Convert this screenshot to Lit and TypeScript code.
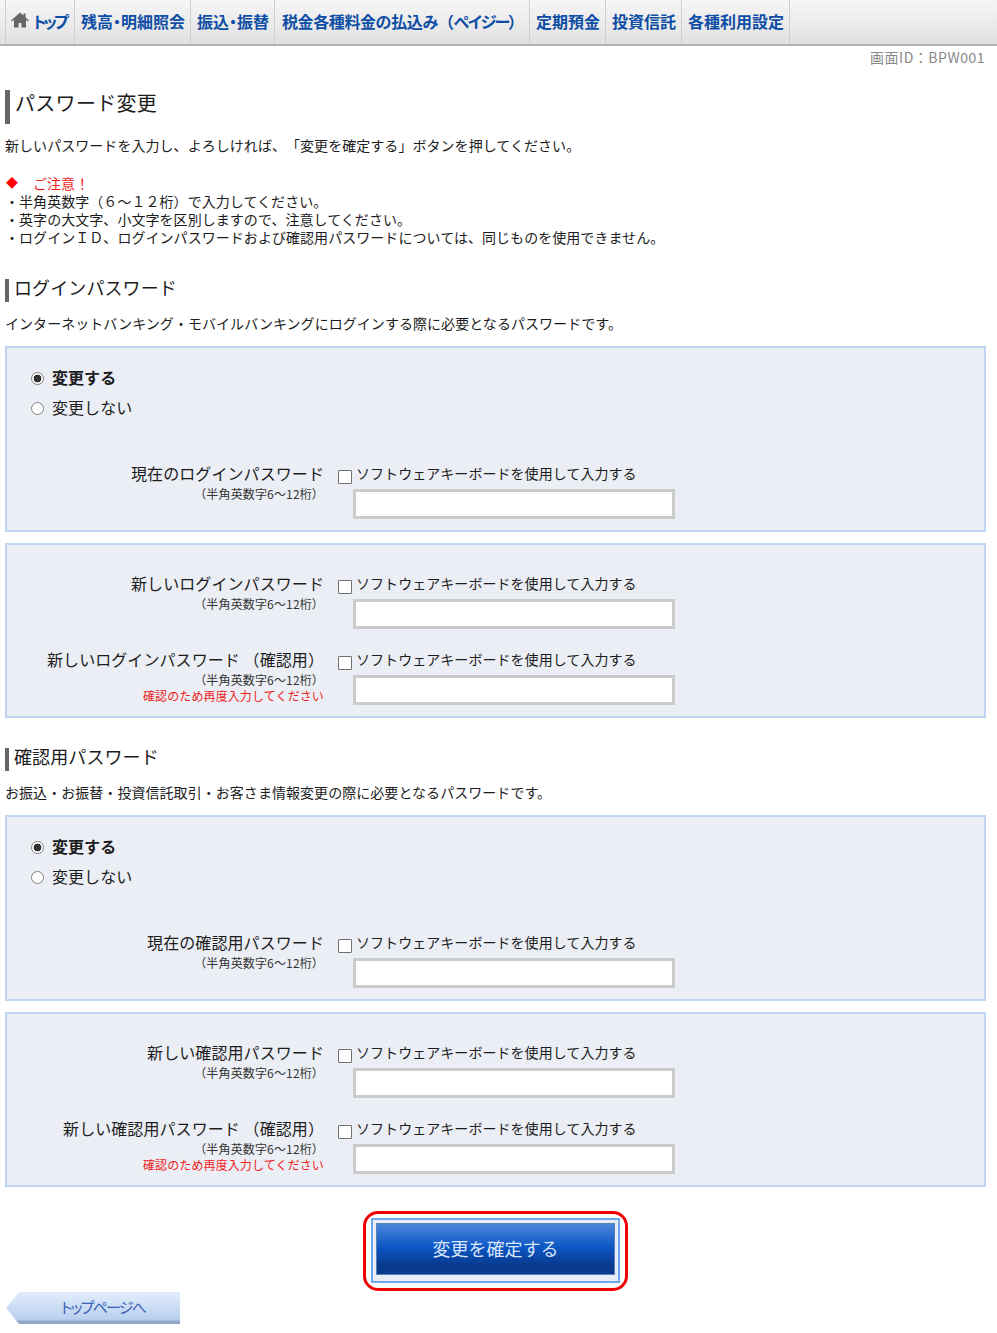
import { LitElement, html, css } from "lit";
import { customElement } from "lit/decorators.js";

const SMALL = "（半角英数字6〜12桁）";
const AGAIN = "確認のため再度入力してください";

@customElement("app-root")
export class AppRoot extends LitElement {
  static styles = css`
    :host {
      display: block;
      width: 997px;
      height: 1333px;
      overflow: hidden;
      background: #fff;
      color: #1c1c1c;
      font-family: "Noto Sans CJK JP", "Noto Sans", sans-serif;
      font-size: 14px;
      letter-spacing: 0.05px;
      text-spacing-trim: space-all;
    }
    * { box-sizing: border-box; }
    nav {
      display: flex;
      height: 46px;
      padding-left: 5px;
      background: linear-gradient(#f6f6f6, #e1e1e1);
      border-bottom: 2px solid #b4b4b4;
    }
    nav a {
      display: flex;
      align-items: center;
      flex: none;
      gap: 4px;
      padding: 0 6px 2px;
      border-left: 1px solid #cfcfcf;
      color: #0f4ea5;
      font-size: 16px;
      font-weight: 700;
      letter-spacing: 0;
      white-space: nowrap;
      line-height: 42px;
    }
    nav a:last-child { border-right: 1px solid #cfcfcf; }
    nav a.top { width: 69px; letter-spacing: -3px; padding-left: 5px; }
    nav a.kana { font-feature-settings: "palt"; }
    nav a.balance { width: 116px; }
    nav a.transfer { width: 84px; }
    nav a.wide { width: 255px; padding-left: 7px; letter-spacing: -0.4px; gap: 0; }
    nav a.wide span { display: block; }
    nav a.wide .squeeze { letter-spacing: -2.4px; }
    nav a.four { width: 76px; }
    nav a.six { width: 109px; }
    nav svg { display: block; margin-top: -2px; flex: none; }
    .screen {
      text-align: right;
      padding-right: 12px;
      color: #888;
      line-height: 22px;
      height: 22px;
      letter-spacing: 0.5px;
    }
    main { padding: 0 11px 0 5px; }
    h1, h2 { margin: 0; font-weight: 400; border-left-style: solid; border-left-color: #666; white-space: nowrap; }
    h1 {
      margin-top: 22px;
      height: 34px;
      border-left-width: 5px;
      padding-left: 5px;
      font-size: 20px;
      line-height: 26px;
      letter-spacing: 0.3px;
    }
    h2 {
      height: 23px;
      border-left-width: 4px;
      padding-left: 5px;
      font-size: 18px;
      line-height: 17px;
      letter-spacing: 0.1px;
    }
    p { margin: 0; white-space: nowrap; }
    .lead { margin-top: 11px; line-height: 20px; height: 20px; }
    .notes { margin-top: 19px; line-height: 18px; }
    .attention { color: #f01c1c; display: flex; }
    .diamond { width: 28px; font-size: 12px; padding-left: 1px; color: #f00; }
    .login { margin-top: 33px; }
    .second { margin-top: 30px; }
    .desc { margin: 11px 0 13px; line-height: 20px; height: 20px; }
    .panel {
      background: #ebeef4;
      border: 2px solid #bfd5f2;
      padding-bottom: 11px;
    }
    .panel + .panel { margin-top: 11px; }
    .panel.change { padding-top: 15px; }
    .panel.fresh { padding-top: 27px; }
    .choice {
      display: flex;
      align-items: center;
      gap: 8px;
      height: 30px;
      padding: 0 0 2px 24px;
      font-size: 16px;
    }
    .choice.on { font-weight: 700; }
    .choice input {
      appearance: none;
      width: 13px;
      height: 13px;
      margin: 2px 0 0;
      border: 1px solid #808080;
      border-radius: 50%;
      background: #fff;
    }
    .choice input:checked { background: radial-gradient(circle, #333 0 3.6px, #fff 4.2px); }
    .row {
      display: grid;
      grid-template-columns: 317px 1fr;
      column-gap: 14px;
    }
    .change .row { margin-top: 39px; }
    .row + .row { margin-top: 19px; }
    .labels { text-align: right; }
    .name { font-size: 16px; line-height: 22px; margin-bottom: 2px; white-space: nowrap; letter-spacing: 0.08px; }
    .hint { font-size: 12px; line-height: 16px; color: #333; white-space: nowrap; letter-spacing: 0.15px; }
    .hint.red { color: #f01c1c; letter-spacing: 0.12px; }
    .soft {
      display: flex;
      align-items: center;
      gap: 4px;
      height: 24px;
      padding-bottom: 2px;
      white-space: nowrap;
      letter-spacing: 0.05px;
    }
    .soft input {
      appearance: none;
      flex: none;
      width: 14px;
      height: 14px;
      margin: 7px 0 0;
      border: 1px solid #6f6f6f;
      border-radius: 1px;
      background: #fff;
    }
    .field {
      display: block;
      width: 322px;
      height: 30px;
      margin: 3px 0 0 15px;
      border: 3px solid #cbcbcb;
      background: #fff;
      outline: none;
    }
    .actions { display: flex; justify-content: center; margin-top: 24px; }
    .ring {
      width: 265px;
      height: 80px;
      border: 3px solid #f00000;
      border-radius: 15px;
      padding: 4px 5px 0;
    }
    .confirm {
      display: block;
      width: 249px;
      height: 65px;
      padding: 3px 3px 6px;
      border: 2px solid #6ea6ee;
      background: #e9edf6;
    }
    .confirm span {
      display: flex;
      align-items: center;
      justify-content: center;
      height: 100%;
      padding-bottom: 2px;
      color: #d9e6f8;
      font-family: "Noto Sans CJK JP", sans-serif;
      font-size: 18px;
      background: linear-gradient(#4b85d8 0, #0b55c4 48%, #083a8e 82%, #083a8e 100%);
      border: 1px solid #5d7fb8;
    }
    .back {
      display: flex;
      align-items: center;
      justify-content: center;
      width: 174px;
      height: 32px;
      margin: 1px 0 0 1px;
      padding: 0 0 3px 20px;
      color: #3a62b4;
      font-size: 15px;
      font-feature-settings: "palt";
      letter-spacing: -1.8px;
      background: linear-gradient(#e2edfb, #b9d0ef 85%, #8fa7ca 92%);
      clip-path: polygon(13px 0, 100% 0, 100% 100%, 13px 100%, 0 50%);
    }
  `;

  private row(name: string, again = false) {
    return html`
      <div class="row">
        <div class="labels">
          <div class="name">${name}</div>
          <div class="hint">${SMALL}</div>
          ${again ? html`<div class="hint red">${AGAIN}</div>` : null}
        </div>
        <div>
          <label class="soft"><input type="checkbox" />ソフトウェアキーボードを使用して入力する</label>
          <input class="field" type="password" />
        </div>
      </div>
    `;
  }

  private section(group: string, current: string, fresh: string, confirm: string) {
    return html`
      <div class="panel change">
        <label class="choice on"><input type="radio" name=${group} checked />変更する</label>
        <label class="choice"><input type="radio" name=${group} />変更しない</label>
        ${this.row(current)}
      </div>
      <div class="panel fresh">
        ${this.row(fresh)}
        ${this.row(confirm, true)}
      </div>
    `;
  }

  render() {
    return html`
      <nav>
        <a class="top kana">
          <svg width="18" height="16" viewBox="0 0 18 16" aria-hidden="true">
            <path fill="#666" d="M9 0.5 0 8.4l1 1.1L3 7.8v7.7h4.6v-4.4h2.8v4.4H15V7.8l2 1.7 1-1.1-3.4-3V1.5h-2.2v2z" />
          </svg>
          <span>トップ</span>
        </a>
        <a class="kana balance">残高・明細照会</a>
        <a class="kana transfer">振込・振替</a>
        <a class="wide"><span>税金各種料金の払込み（</span><span class="squeeze">ペイジー</span><span>）</span></a>
        <a class="four">定期預金</a>
        <a class="four">投資信託</a>
        <a class="six">各種利用設定</a>
      </nav>
      <div class="screen">画面ID：BPW001</div>
      <main>
        <h1>パスワード変更</h1>
        <p class="lead">新しいパスワードを入力し、よろしければ、「変更を確定する」ボタンを押してください。</p>
        <div class="notes">
          <p class="attention"><span class="diamond">◆</span>ご注意！</p>
          <p>・半角英数字（６～１２桁）で入力してください。</p>
          <p>・英字の大文字、小文字を区別しますので、注意してください。</p>
          <p>・ログインＩＤ、ログインパスワードおよび確認用パスワードについては、同じものを使用できません。</p>
        </div>
        <h2 class="login">ログインパスワード</h2>
        <p class="desc">インターネットバンキング・モバイルバンキングにログインする際に必要となるパスワードです。</p>
        ${this.section("login", "現在のログインパスワード", "新しいログインパスワード", "新しいログインパスワード （確認用）")}
        <h2 class="second">確認用パスワード</h2>
        <p class="desc">お振込・お振替・投資信託取引・お客さま情報変更の際に必要となるパスワードです。</p>
        ${this.section("confirm", "現在の確認用パスワード", "新しい確認用パスワード", "新しい確認用パスワード （確認用）")}
        <div class="actions">
          <div class="ring">
            <button class="confirm" type="button"><span>変更を確定する</span></button>
          </div>
        </div>
        <div class="back">トップページへ</div>
      </main>
    `;
  }
}
